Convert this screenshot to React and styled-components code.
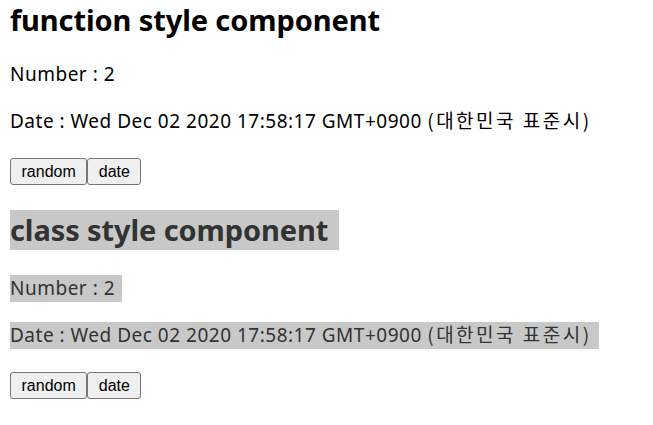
import React from "react";
import styled, { createGlobalStyle } from "styled-components";

const Global = createGlobalStyle`
  html, body { margin: 0; padding: 0; background: #fff; }
  body {
    font-family: "Noto Sans", "Noto Sans CJK KR", sans-serif;
    color: #000;
  }
`;

const Page = styled.div`
  padding: 0 10px;
`;

const Section = styled.section`
  display: flex;
  flex-direction: column;
  align-items: flex-start;
  color: ${(p) => (p.$shaded ? "#333" : "#000")};
  & + & {
    margin-top: 25px;
  }
`;

const Title = styled.h1`
  margin: 0 0 ${(p) => (p.$shaded ? "25px" : "21px")};
  font-size: 29px;
  line-height: 40px;
  font-weight: 700;
  letter-spacing: -0.1px;
  padding-right: ${(p) => (p.$shaded ? "11px" : "0")};
  background: ${(p) => (p.$shaded ? "#c8c8c8" : "transparent")};
`;

const Line = styled.p`
  margin: 0;
  height: 27px;
  font-size: 19px;
  line-height: 27px;
  letter-spacing: 0.5px;
  white-space: nowrap;
  padding-right: ${(p) => (p.$shaded ? "7px" : "0")};
  background: ${(p) => (p.$shaded ? "#c8c8c8" : "transparent")};
  & + & {
    margin-top: 20px;
  }
`;

const Zone = styled.span`
  font-family: "Noto Sans CJK KR", sans-serif;
  line-height: 19px;
  letter-spacing: 2.5px;
`;

const ButtonRow = styled.div`
  display: flex;
  margin-top: 23px;
`;

const Button = styled.button`
  font-family: "Liberation Sans", Arial, sans-serif;
  font-size: 16px;
  line-height: 18px;
  height: 27px;
  padding: 0 10.5px;
  color: #000;
  background: #efefef;
  border: 1px solid #767676;
  border-radius: 3px;
  cursor: pointer;
`;

const DATE = "Wed Dec 02 2020 17:58:17 GMT+0900";
const ZONE = "(대한민국 표준시)";

function Block({ title, shaded }) {
  return (
    <Section $shaded={shaded}>
      <Title as={shaded ? "h2" : "h1"} $shaded={shaded}>
        {title}
      </Title>
      <Line $shaded={shaded}>Number : 2</Line>
      <Line $shaded={shaded}>
        Date : {DATE} <Zone>{ZONE}</Zone>
      </Line>
      <ButtonRow>
        <Button>random</Button>
        <Button>date</Button>
      </ButtonRow>
    </Section>
  );
}

export default function App() {
  return (
    <>
      <Global />
      <Page>
        <Block title="function style component" />
        <Block title="class style component" shaded />
      </Page>
    </>
  );
}
